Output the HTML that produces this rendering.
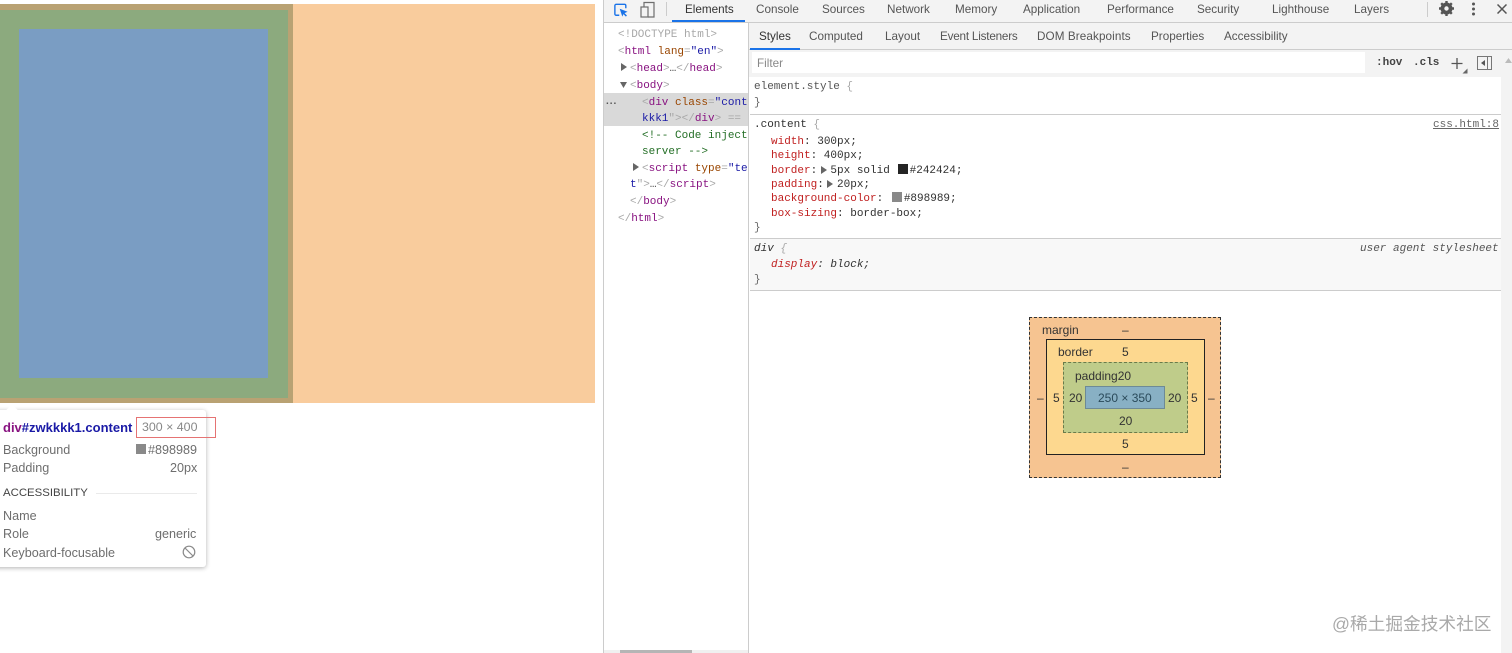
<!DOCTYPE html>
<html lang="en"><head><meta charset="utf-8"><title>DevTools</title>
<style>
html,body{margin:0;padding:0;background:#fff}
#r{position:relative;width:1512px;height:653px;overflow:hidden;background:#fff;font-family:"Liberation Sans","Noto Sans CJK SC",sans-serif;font-size:12px;color:#444;filter:blur(.3px)}
#r div,#r span.a{position:absolute;white-space:pre}
.b{position:absolute}
.m{font-family:"Liberation Mono",monospace;font-size:11px;line-height:14px}
.g{color:#a8a8a8}.p{color:#881280}.o{color:#994500}.s{color:#1a1aa6}.c{color:#236e25}.k{color:#c02020}.d{color:#303030}
.t{color:#555;font-size:11.7px;line-height:14px}
.h{color:#6e6e6e;font-size:12.6px;line-height:16px}
.bm{font-size:12px;line-height:14px;color:#333;text-align:center}
</style></head><body><div id="r">

<div style="left:0;top:4px;width:595px;height:399px;background:#f9cc9d"></div>
<div style="left:0;top:4px;width:293px;height:399px;background:#b9a273"></div>
<div style="left:0;top:10px;width:288px;height:388px;background:#8caa7e"></div>
<div style="left:19px;top:29px;width:249px;height:349px;background:#7a9dc3"></div>

<div style="left:-8px;top:410px;width:214px;height:157px;background:#fff;border-radius:3px;box-shadow:0 1px 5px rgba(0,0,0,.3)"></div>
<div style="left:8px;top:406px;width:8px;height:8px;background:#fff;transform:rotate(45deg)"></div>
<div style="left:3px;top:420px;font-size:13px;line-height:15px;font-weight:bold;color:#1a1aa6"><span style="color:#881280">div</span>#zwkkkk1.content</div>
<div style="left:136px;top:417px;width:78px;height:19px;border:1px solid #e57373"></div>
<div style="left:142px;top:420px;font-size:12.4px;line-height:15px;color:#888">300 × 400</div>
<div class="h" style="left:3px;top:442px">Background</div>
<div style="left:136px;top:444px;width:10px;height:10px;background:#898989"></div>
<div class="h" style="left:148px;top:442px">#898989</div>
<div class="h" style="left:3px;top:460px">Padding</div>
<div class="h" style="left:170px;top:460px">20px</div>
<div style="left:3px;top:486px;font-size:11.4px;line-height:15px;color:#444">ACCESSIBILITY</div>
<div style="left:96px;top:493px;width:101px;height:1px;background:#eaeaea"></div>
<div class="h" style="left:3px;top:508px">Name</div>
<div class="h" style="left:3px;top:526px">Role</div>
<div class="h" style="left:155px;top:526px">generic</div>
<div class="h" style="left:3px;top:545px">Keyboard-focusable</div>
<svg class="b" style="left:182px;top:545px" width="14" height="14" viewBox="0 0 14 14" fill="none" stroke="#8a8a8a" stroke-width="1.2"><circle cx="7" cy="7" r="5.8"/><path d="M3 3l8 8"/></svg>

<!-- devtools -->
<div style="left:603px;top:0;width:909px;height:653px;background:#fff"></div>
<div style="left:603px;top:0;width:1px;height:653px;background:#ccc"></div>
<div style="left:604px;top:0;width:908px;height:22px;background:#f3f3f3;border-bottom:1px solid #ccc"></div>
<svg class="b" style="left:614px;top:3px" width="14" height="14" viewBox="0 0 16 16" fill="none"><path d="M6 14H2.500A1.500 1.500 0 0 1 1 12.500V3a1.500 1.500 0 0 1 1.500-1.500H12A1.500 1.500 0 0 1 13.500 3V6" stroke="#1a73e8" stroke-width="1.600"/><path d="M6.500 6.500L15.500 10l-3.500 1.500 2.800 2.800-1.200 1.200-2.800-2.800L9.500 15.500z" fill="#1a73e8"/></svg>
<svg class="b" style="left:640px;top:1px" width="16" height="17" viewBox="0 0 16 17" fill="none" stroke="#6e6e6e" stroke-width="1.200"><rect x="1" y="6" width="7" height="10"/><path d="M4 6V1.500h10V16H8"/></svg>
<div style="left:666px;top:2px;width:1px;height:14px;background:#ccc"></div>
<div style="left:672px;top:20px;width:73px;height:2px;background:#1a73e8"></div>
<div class="t" style="left:685px;top:3px;color:#333">Elements</div>
<div class="t" style="left:756px;top:3px">Console</div>
<div class="t" style="left:822px;top:3px">Sources</div>
<div class="t" style="left:887px;top:3px">Network</div>
<div class="t" style="left:955px;top:3px">Memory</div>
<div class="t" style="left:1023px;top:3px">Application</div>
<div class="t" style="left:1107px;top:3px">Performance</div>
<div class="t" style="left:1197px;top:3px">Security</div>
<div class="t" style="left:1272px;top:3px">Lighthouse</div>
<div class="t" style="left:1354px;top:3px">Layers</div>
<div style="left:1427px;top:2px;width:1px;height:15px;background:#ccc"></div>
<svg class="b" style="left:1439px;top:1px" width="15" height="15" viewBox="0 0 15 15"><circle cx="7.500" cy="7.500" r="4.500" fill="none" stroke="#555" stroke-width="3"/><g stroke="#555" stroke-width="2.400"><path d="M7.500 0v15M0 7.500h15M2.200 2.200l10.600 10.600M12.800 2.200L2.200 12.800"/></g><circle cx="7.500" cy="7.500" r="2.200" fill="#f3f3f3"/></svg>
<svg class="b" style="left:1471px;top:2px" width="5" height="14" viewBox="0 0 5 14" fill="#555"><circle cx="2.500" cy="2" r="1.500"/><circle cx="2.500" cy="7" r="1.500"/><circle cx="2.500" cy="12" r="1.500"/></svg>
<svg class="b" style="left:1497px;top:4px" width="10" height="10" viewBox="0 0 10 10" stroke="#555" stroke-width="1.500"><path d="M.5.500l9 9M9.500.500l-9 9"/></svg>

<!-- DOM tree -->
<div style="left:604px;top:93px;width:144px;height:33px;background:#d9d9d9"></div>
<div style="left:748px;top:23px;width:1px;height:630px;background:#ccc"></div>
<div style="left:606px;top:97px;color:#555;font-size:10px;line-height:10px;font-weight:bold;letter-spacing:1px">...</div>
<div style="left:604px;top:23px;width:144px;height:630px;overflow:hidden">
<div class="m g" style="left:14px;top:5px">&lt;!DOCTYPE html&gt;</div>
<div class="m" style="left:14px;top:22px"><span class="g">&lt;</span><span class="p">html</span> <span class="o">lang</span><span class="g">=</span><span class="s">"en"</span><span class="g">&gt;</span></div>
<div class="m" style="left:26px;top:39px"><span class="g">&lt;</span><span class="p">head</span><span class="g">&gt;</span>…<span class="g">&lt;/</span><span class="p">head</span><span class="g">&gt;</span></div>
<div class="m" style="left:26px;top:56px"><span class="g">&lt;</span><span class="p">body</span><span class="g">&gt;</span></div>
<div class="m" style="left:38px;top:73px"><span class="g">&lt;</span><span class="p">div</span> <span class="o">class</span><span class="g">=</span><span class="s">"content</span></div>
<div class="m" style="left:38px;top:89px"><span class="s">kkk1</span><span class="g">"&gt;&lt;/</span><span class="p">div</span><span class="g">&gt; == $0</span></div>
<div class="m c" style="left:38px;top:106px">&lt;!-- Code injected by live-</div>
<div class="m c" style="left:38px;top:122px">server --&gt;</div>
<div class="m" style="left:38px;top:139px"><span class="g">&lt;</span><span class="p">script</span> <span class="o">type</span><span class="g">=</span><span class="s">"text/javascrip</span></div>
<div class="m" style="left:26px;top:155px"><span class="s">t</span><span class="g">"&gt;</span>…<span class="g">&lt;/</span><span class="p">script</span><span class="g">&gt;</span></div>
<div class="m" style="left:26px;top:172px"><span class="g">&lt;/</span><span class="p">body</span><span class="g">&gt;</span></div>
<div class="m" style="left:14px;top:189px"><span class="g">&lt;/</span><span class="p">html</span><span class="g">&gt;</span></div>
</div>
<svg class="b" style="left:620px;top:62px" width="8" height="30" viewBox="0 0 8 30" fill="#666"><path d="M1 1l6 4-6 4zM0 20h7l-3.500 6z"/></svg>
<svg class="b" style="left:632px;top:163px" width="7" height="9" viewBox="0 0 7 9" fill="#666"><path d="M1 0l6 4-6 4z"/></svg>
<div style="left:604px;top:650px;width:144px;height:3px;background:#f0f0f0"></div>
<div style="left:620px;top:650px;width:72px;height:3px;background:#b5b5b5"></div>

<!-- Styles tabs -->
<div style="left:749px;top:23px;width:763px;height:26px;background:#f3f3f3;border-bottom:1px solid #ccc"></div>
<div style="left:750px;top:48px;width:50px;height:2px;background:#1a73e8"></div>
<div class="t" style="left:759px;top:30px;color:#333">Styles</div>
<div class="t" style="left:809px;top:30px">Computed</div>
<div class="t" style="left:885px;top:30px">Layout</div>
<div class="t" style="left:940px;top:30px;letter-spacing:-.2px">Event Listeners</div>
<div class="t" style="left:1037px;top:30px;letter-spacing:.1px">DOM Breakpoints</div>
<div class="t" style="left:1151px;top:30px">Properties</div>
<div class="t" style="left:1224px;top:30px">Accessibility</div>

<!-- filter -->
<div style="left:749px;top:50px;width:763px;height:27px;background:#f3f3f3"></div>
<div style="left:752px;top:52px;width:613px;height:21px;background:#fff"></div>
<div class="t" style="left:757px;top:57px;color:#888">Filter</div>
<div class="m" style="left:1376px;top:56px;font-weight:bold;color:#444">:hov</div>
<div class="m" style="left:1413px;top:56px;font-weight:bold;color:#444">.cls</div>
<svg class="b" style="left:1451px;top:57px" width="17" height="17" viewBox="0 0 17 17"><path d="M6 1v11M.5 6.500h11" stroke="#555" stroke-width="1.300"/><path d="M16.500 11.500v5h-5z" fill="#666"/></svg>
<svg class="b" style="left:1477px;top:56px" width="16" height="15" viewBox="0 0 16 15" fill="none"><rect x=".5" y=".5" width="14" height="13" stroke="#777"/><path d="M10.500 1v13" stroke="#777"/><path d="M8 4v6L4 7z" fill="#555"/></svg>
<svg class="b" style="left:1505px;top:58px" width="7" height="5"><path d="M0 5l3.500-5L7 5z" fill="#bbb"/></svg>
<div style="left:1501px;top:77px;width:11px;height:576px;background:#f3f3f3"></div>

<!-- rules -->
<div style="left:750px;top:77px;width:751px;height:37px;background:#fff;border-bottom:1px solid #ccc"></div>
<div class="m d" style="left:754px;top:80px;color:#555">element.style <span class="g">{</span></div>
<div class="m g" style="left:754px;top:96px;color:#666">}</div>
<div class="m d" style="left:754px;top:118px">.content <span class="g">{</span></div>
<div class="m" style="left:1433px;top:118px;color:#666;text-decoration:underline">css.html:8</div>
<div class="m d" style="left:771px;top:135px"><span class="k">width</span>: 300px;</div>
<div class="m d" style="left:771px;top:149px"><span class="k">height</span>: 400px;</div>
<div class="m d" style="left:771px;top:164px"><span class="k">border</span>:  5px solid   #242424;</div>
<svg class="b" style="left:821px;top:166px" width="6" height="8"><path d="M0 0l6 4-6 4z" fill="#666"/></svg>
<div style="left:898px;top:164px;width:10px;height:10px;background:#242424"></div>
<div class="m d" style="left:771px;top:178px"><span class="k">padding</span>:  20px;</div>
<svg class="b" style="left:827px;top:180px" width="6" height="8"><path d="M0 0l6 4-6 4z" fill="#666"/></svg>
<div class="m d" style="left:771px;top:192px"><span class="k">background-color</span>: <span style="margin-left:14px">#898989;</span></div>
<div style="left:892px;top:192px;width:10px;height:10px;background:#898989"></div>
<div class="m d" style="left:771px;top:207px"><span class="k">box-sizing</span>: border-box;</div>
<div class="m g" style="left:754px;top:221px;color:#666">}</div>
<div style="left:750px;top:238px;width:751px;height:1px;background:#ccc"></div>
<div style="left:750px;top:239px;width:751px;height:51px;background:#f8f8f8"></div>
<div class="m d" style="left:754px;top:242px;font-style:italic">div <span class="g">{</span></div>
<div class="m" style="left:1360px;top:242px;font-style:italic;color:#555">user agent stylesheet</div>
<div class="m d" style="left:771px;top:258px;font-style:italic"><span class="k">display</span>: block;</div>
<div class="m g" style="left:754px;top:273px;color:#666">}</div>
<div style="left:750px;top:290px;width:751px;height:1px;background:#ccc"></div>

<!-- box model -->
<div style="left:1029px;top:317px;width:190px;height:159px;background:#f6c491;border:1px dashed #333"></div>
<div style="left:1046px;top:339px;width:157px;height:114px;background:#fdd88f;border:1px solid #222"></div>
<div style="left:1063px;top:362px;width:123px;height:69px;background:#bfcc8a;border:1px dashed #6a7a4a"></div>
<div style="left:1085px;top:386px;width:78px;height:21px;background:#88b0c4;border:1px solid #6d8a96"></div>
<div class="bm" style="left:1042px;top:323px">margin</div>
<div class="bm" style="left:1122px;top:323px">–</div>
<div class="bm" style="left:1058px;top:345px">border</div>
<div class="bm" style="left:1122px;top:345px">5</div>
<div class="bm" style="left:1075px;top:369px">padding20</div>
<div class="bm" style="left:1037px;top:391px">–</div>
<div class="bm" style="left:1053px;top:391px">5</div>
<div class="bm" style="left:1069px;top:391px">20</div>
<div class="bm" style="left:1098px;top:391px;color:#2a4a5a">250 × 350</div>
<div class="bm" style="left:1168px;top:391px">20</div>
<div class="bm" style="left:1191px;top:391px">5</div>
<div class="bm" style="left:1208px;top:391px">–</div>
<div class="bm" style="left:1119px;top:414px">20</div>
<div class="bm" style="left:1122px;top:437px">5</div>
<div class="bm" style="left:1122px;top:460px">–</div>

<div style="left:1332px;top:614px;font-size:17.7px;line-height:20px;color:#a9a9a9">@稀土掘金技术社区</div>
</div></body></html>
